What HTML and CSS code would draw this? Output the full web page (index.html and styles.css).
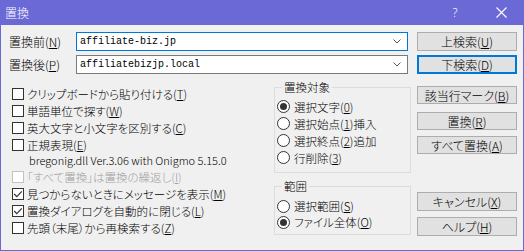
FILE: index.html
```html
<!DOCTYPE html>
<html lang="ja">
<head>
    <meta charset="UTF-8">
    <title>置換</title>
    <link rel="stylesheet" href="styles.css">
</head>
<body>
    <div class="window">
        <div class="titlebar">
            <span class="title">置換</span>
            <span class="title-help">?</span>
            <span class="title-close">
                <svg width="11" height="11" viewBox="0 0 11 11"><path d="M0.5 0.5 L10.5 10.5 M10.5 0.5 L0.5 10.5" stroke="#fff" stroke-width="1.1" fill="none"/></svg>
            </span>
        </div>
        <div class="dialog">
            <div class="main">
                <div class="field-row">
                    <span class="field-label">置換前(<u>N</u>)</span>
                    <div class="combo focused">
                        <span class="combo-text">affiliate-biz.jp</span>
                        <svg class="chevron" width="8" height="5" viewBox="0 0 8 5"><path d="M0.5 0.5 L4 4 L7.5 0.5" stroke="#555" fill="none"/></svg>
                    </div>
                </div>
                <div class="field-row">
                    <span class="field-label">置換後(<u>P</u>)</span>
                    <div class="combo">
                        <span class="combo-text">affiliatebizjp.local</span>
                        <svg class="chevron" width="8" height="5" viewBox="0 0 8 5"><path d="M0.5 0.5 L4 4 L7.5 0.5" stroke="#555" fill="none"/></svg>
                    </div>
                </div>

                <div class="options">
                    <div class="checks">
                        <div class="check"><span class="box"></span>クリップボードから貼り付ける(<u>T</u>)</div>
                        <div class="check"><span class="box"></span>単語単位で探す(<u>W</u>)</div>
                        <div class="check"><span class="box"></span>英大文字と小文字を区別する(<u>C</u>)</div>
                        <div class="check"><span class="box"></span>正規表現(<u>E</u>)</div>
                        <div class="lib-info">bregonig.dll Ver.3.06 with Onigmo 5.15.0</div>
                        <div class="check disabled"><span class="box"></span>「すべて置換」は置換の繰返し(<u>I</u>)</div>
                        <div class="check"><span class="box checked"><svg width="10" height="10" viewBox="0 0 10 10"><path d="M1.2 5 L3.8 7.6 L8.8 2.4" stroke="#333" stroke-width="1.2" fill="none"/></svg></span>見つからないときにメッセージを表示(<u>M</u>)</div>
                        <div class="check"><span class="box checked"><svg width="10" height="10" viewBox="0 0 10 10"><path d="M1.2 5 L3.8 7.6 L8.8 2.4" stroke="#333" stroke-width="1.2" fill="none"/></svg></span>置換ダイアログを自動的に閉じる(<u>L</u>)</div>
                        <div class="check"><span class="box"></span>先頭（末尾）から再検索する(<u>Z</u>)</div>
                    </div>

                    <div class="groups">
                        <fieldset class="group group-target">
                            <legend>置換対象</legend>
                            <div class="radio"><span class="dot on"></span>選択文字(<u>0</u>)</div>
                            <div class="radio"><span class="dot"></span>選択始点(<u>1</u>)挿入</div>
                            <div class="radio"><span class="dot"></span>選択終点(<u>2</u>)追加</div>
                            <div class="radio"><span class="dot"></span>行削除(<u>3</u>)</div>
                        </fieldset>
                        <fieldset class="group group-range">
                            <legend>範囲</legend>
                            <div class="radio"><span class="dot"></span>選択範囲(<u>S</u>)</div>
                            <div class="radio"><span class="dot on"></span>ファイル全体(<u>O</u>)</div>
                        </fieldset>
                    </div>
                </div>
            </div>

            <div class="buttons">
                <button class="btn b-up">上検索(<u>U</u>)</button>
                <button class="btn b-down default">下検索(<u>D</u>)</button>
                <button class="btn b-mark">該当行マーク(<u>B</u>)</button>
                <button class="btn b-replace">置換(<u>R</u>)</button>
                <button class="btn b-all">すべて置換(<u>A</u>)</button>
                <button class="btn b-cancel">キャンセル(<u>X</u>)</button>
                <button class="btn b-help">ヘルプ(<u>H</u>)</button>
            </div>
        </div>
    </div>
</body>
</html>
```

FILE: styles.css
```css
* {
    box-sizing: border-box;
}
html, body {
    margin: 0;
    padding: 0;
}
body {
    width: 524px;
    height: 251px;
    overflow: hidden;
    font-family: "Noto Sans CJK JP", sans-serif;
    font-size: 11.5px;
    font-weight: 300;
    font-feature-settings: "palt";
    color: #000;
    background: #f0f0f0;
}
u {
    text-decoration-thickness: 1px;
    text-underline-offset: 1px;
}

.window {
    width: 524px;
    height: 251px;
    display: flex;
    flex-direction: column;
}
.titlebar {
    height: 25px;
    background: #6b69d6;
    color: #fff;
    display: flex;
    align-items: center;
    padding-left: 5px;
}
.title {
    font-size: 12px;
    flex: 1;
}
.title-help {
    width: 46px;
    text-align: center;
    font-family: "Noto Sans", sans-serif;
    font-size: 12px;
}
.title-close {
    width: 46px;
    display: flex;
    justify-content: center;
}

.dialog {
    flex: 1;
    display: flex;
    border: 1px solid #6b69d6;
    border-top: 0;
    padding: 7px 0 0 8px;
}
.main {
    width: 402px;
}

/* поля ввода */
.field-row {
    display: flex;
    height: 19px;
    margin-bottom: 4px;
}
.field-label {
    width: 67px;
    line-height: 19px;
    font-size: 12px;
}
.combo {
    width: 332px;
    height: 19px;
    background: #fff;
    border: 1px solid #7a7a7a;
    display: flex;
    align-items: center;
    padding: 0 6px 0 3px;
}
.combo.focused {
    border-color: #0078d7;
}
.combo-text {
    flex: 1;
    font-family: "Liberation Mono", monospace;
    font-size: 10px;
    font-weight: 400;
}

/* нижняя часть */
.options {
    display: flex;
    margin-top: 6px;
}
.checks {
    flex: 1;
    padding: 5px 0 0 3px;
}
.check {
    height: 17px;
    display: flex;
    align-items: center;
    white-space: nowrap;
}
.box {
    width: 12px;
    height: 12px;
    border: 1px solid #333;
    background: #fff;
    margin-right: 3px;
    display: flex;
    align-items: center;
    justify-content: center;
}
.check.disabled {
    color: #a0a0a0;
}
.check.disabled .box {
    border-color: #c2c2c2;
}
.lib-info {
    height: 15px;
    line-height: 15px;
    padding-left: 17px;
    font-size: 11px;
    white-space: nowrap;
}

.groups {
    width: 137px;
}
.group {
    margin: 0;
    padding: 0 2px;
    border: 1px solid #dcdcdc;
}
.group legend {
    padding: 0 2px;
    margin-left: 5px;
    line-height: 14px;
}
.group-target {
    height: 93px;
    padding-top: 4px;
}
.group-range {
    height: 56px;
    margin-top: 6px;
    padding-top: 5px;
}
.radio {
    height: 17px;
    display: flex;
    align-items: center;
    white-space: nowrap;
}
.group-range .radio {
    height: 16px;
}
.dot {
    width: 13px;
    height: 13px;
    border: 1px solid #333;
    border-radius: 50%;
    background: #fff;
    margin-right: 4px;
    display: flex;
    align-items: center;
    justify-content: center;
}
.dot.on::after {
    content: "";
    width: 7px;
    height: 7px;
    border-radius: 50%;
    background: #333;
}

/* кнопки */
.buttons {
    width: 100px;
    margin-left: 6px;
    display: flex;
    flex-direction: column;
}
.btn {
    height: 19px;
    padding: 0;
    background: #e1e1e1;
    border: 1px solid #adadad;
    font-family: inherit;
    font-size: 12px;
    font-weight: 300;
    font-feature-settings: "palt";
    color: #000;
    line-height: 17px;
}
.btn.default {
    border: 2px solid #0078d7;
    line-height: 15px;
}
.b-down { margin-top: 4px; }
.b-mark { margin-top: 12px; height: 18px; }
.b-replace { margin-top: 8px; height: 18px; }
.b-all { margin-top: 6px; height: 18px; }
.b-cancel { margin-top: 38px; }
.b-help { margin-top: 6px; }
```
